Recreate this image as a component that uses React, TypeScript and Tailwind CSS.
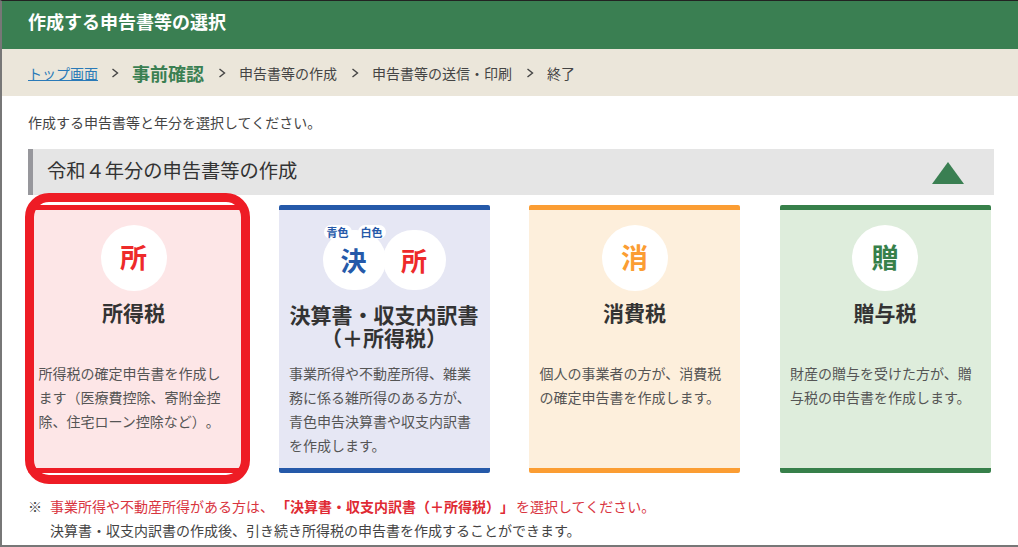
import type { ReactNode } from 'react';

const steps = ['申告書等の作成', '申告書等の送信・印刷', '終了'];

function Chevron({ className = 'w-[35px]' }: { className?: string }) {
  return (
    <span className={`flex shrink-0 justify-center ${className}`}>
      <svg width="8" height="10" viewBox="0 0 8 10" fill="none" stroke="#444" strokeWidth="1.4">
        <path d="M1.5 1 L6.5 5 L1.5 9" />
      </svg>
    </span>
  );
}

function Circle({ children, className }: { children: ReactNode; className: string }) {
  return (
    <div className={`flex items-center justify-center rounded-full bg-white pb-[1px] font-bold ${className}`}>
      {children}
    </div>
  );
}

interface CardProps {
  boxClass: string;
  icon: ReactNode;
  title: ReactNode;
  titleClass?: string;
  desc: ReactNode;
}

function Card({ boxClass, icon, title, titleClass = '', desc }: CardProps) {
  return (
    <div className={`relative flex h-[268px] flex-col rounded-[2px] border-y-[5px] pl-[10.5px] pt-[15px] ${boxClass}`}>
      <div className="flex h-[66px] items-start justify-center">{icon}</div>
      <div className={`mt-[10px] h-[60px] text-center text-[21px] font-bold leading-[22.5px] text-[#333] ${titleClass}`}>
        {title}
      </div>
      <p className="text-[14px] leading-[24px] text-[#555]">{desc}</p>
    </div>
  );
}

export default function App() {
  return (
    <div className="h-[547px] w-[1018px] overflow-hidden border-t border-b-2 border-l-2 border-t-[#222] border-b-[#777] border-l-[#777] bg-white font-['Noto_Sans_CJK_JP','Liberation_Sans',sans-serif] [text-spacing-trim:space-all]">
      <header className="flex h-[48px] items-center bg-[#3a7f52] pb-[7px] pl-[26px] text-[18px] font-bold text-white">
        作成する申告書等の選択
      </header>

      <nav className="flex h-[47px] items-center bg-[#ebe6da] pl-[26px] pt-[1px] text-[14px] text-[#444]">
        <a className="w-[70px] text-[#2a7ab8] underline">トップ画面</a>
        <Chevron className="w-[34px]" />
        <span className="text-[18px] font-bold text-[#3a7f52]">事前確認</span>
        {steps.map((s) => (
          <span key={s} className="flex items-center">
            <Chevron />
            {s}
          </span>
        ))}
      </nav>

      <main className="pl-[26px]">
        <p className="mt-[16px] h-[21px] text-[14px] leading-[21px] text-[#444]">
          作成する申告書等と年分を選択してください。
        </p>

        <div className="mt-[16px] flex h-[46px] w-[966px] items-center justify-between border-l-[5px] border-l-[#97979c] bg-[#e5e5e5] pl-[14px] pr-[30px]">
          <h2 className="pb-[4px] text-[19.25px] font-normal text-[#333]">令和４年分の申告書等の作成</h2>
          <svg width="32" height="22" viewBox="0 0 32 22" className="mt-[1px]">
            <path d="M16 0 L32 22 L0 22 Z" fill="#3a7f52" />
          </svg>
        </div>

        <div className="mt-[10px] grid grid-cols-[repeat(4,211px)] gap-x-[39.5px]">
          <div className="relative">
            <Card
              boxClass="mr-[-2px] pr-[12.5px] border-y-[#ee1c25] bg-[#fde6e7]"
              icon={<Circle className="h-[66px] w-[66px] text-[27px] text-[#ee2a2a]">所</Circle>}
              title="所得税"
              desc="所得税の確定申告書を作成します（医療費控除、寄附金控除、住宅ローン控除など）。"
            />
            <div className="pointer-events-none absolute -bottom-[11px] -left-[3px] -right-[11px] -top-[12px] rounded-[24px] border-[9px] border-[#ee1c25]" />
          </div>

          <Card
            boxClass="pr-[10.5px] border-y-[#2559a9] bg-[#e6e7f4]"
            icon={
              <div className="relative flex pt-[5px]">
                <Circle className="h-[60px] w-[63px] pr-[1px] text-[26px] text-[#2559a9]">決</Circle>
                <Circle className="-ml-[3px] h-[60px] w-[63px] text-[26px] text-[#ee2a2a]">所</Circle>
                <span className="absolute left-[1px] top-0 flex gap-[6px] text-[11px] font-bold leading-[14px] text-[#2559a9]">
                  <span className="rounded-full bg-white px-[3px]">青色</span>
                  <span className="rounded-full bg-white px-[3px]">白色</span>
                </span>
              </div>
            }
            title={
              <>
                決算書・収支内訳書
                <br />
                （＋所得税）
              </>
            }
            titleClass="pt-[2px]"
            desc="事業所得や不動産所得、雑業務に係る雑所得のある方が、青色申告決算書や収支内訳書を作成します。"
          />

          <Card
            boxClass="pr-[10.5px] border-y-[#fb9d33] bg-[#fdefdc]"
            icon={<Circle className="h-[66px] w-[66px] text-[27px] text-[#fb9d33]">消</Circle>}
            title="消費税"
            desc="個人の事業者の方が、消費税の確定申告書を作成します。"
          />

          <Card
            boxClass="pr-[10.5px] border-y-[#37804a] bg-[#deeddc]"
            icon={<Circle className="h-[66px] w-[66px] text-[27px] text-[#37804a]">贈</Circle>}
            title="贈与税"
            desc="財産の贈与を受けた方が、贈与税の申告書を作成します。"
          />
        </div>

        <div className="mt-[21px] flex text-[14px] leading-[24px]">
          <span className="w-[22px] shrink-0 text-[#444]">※</span>
          <div>
            <p className="text-[#d9353f]">
              事業所得や不動産所得がある方は、
              <b className="mx-[2px] font-bold text-[#e02a33]">「決算書・収支内訳書（＋所得税）」</b>
              を選択してください。
            </p>
            <p className="text-[#444]">決算書・収支内訳書の作成後、引き続き所得税の申告書を作成することができます。</p>
          </div>
        </div>
      </main>
    </div>
  );
}
